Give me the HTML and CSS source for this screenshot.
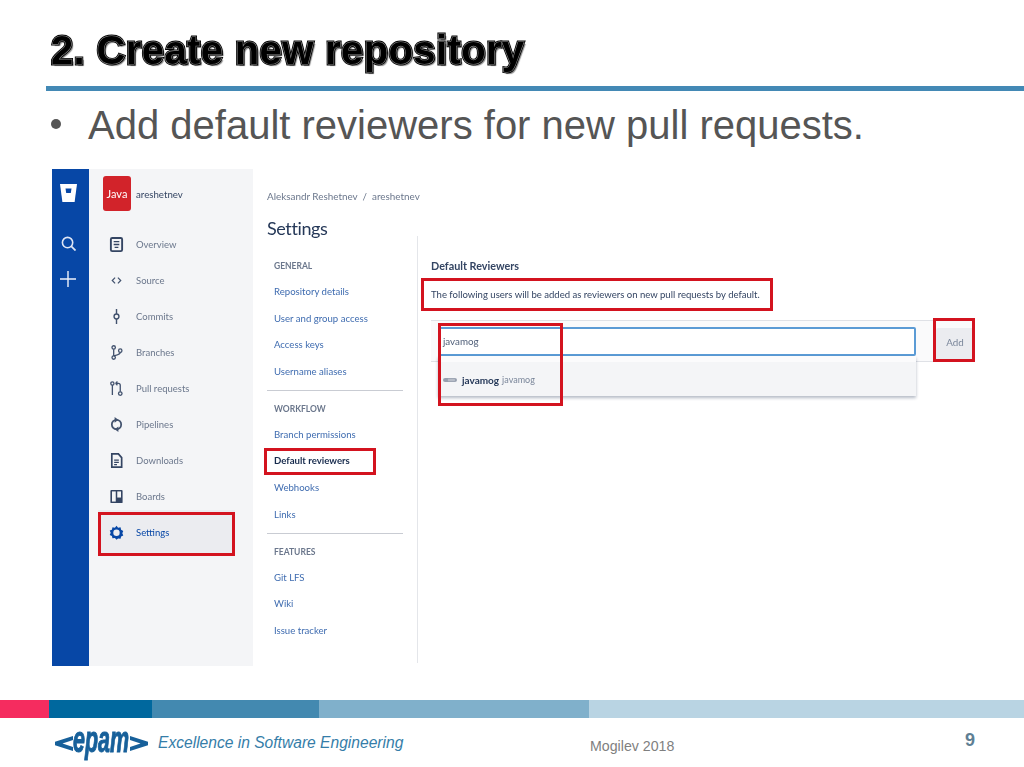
FILE: index.html
```html
<!DOCTYPE html>
<html lang="en">
<head>
  <meta charset="UTF-8" />
  <title>2. Create new repository</title>
  <link rel="stylesheet" href="styles.css">
</head>
<body>
  <main class="slide">
    <h1 class="slide-title" data-text="2. Create new repository">2. Create new repository</h1>
    <div class="title-rule"></div>
    <ul class="bullets">
      <li>Add default reviewers for new pull requests.</li>
    </ul>

    <!-- Bitbucket screenshot -->
    <section class="shot">
      <div class="rail">
        <svg class="rail-logo" viewBox="0 0 17 20"><path d="M0 1h17l-2.400 18H2.400z" fill="#fff"/><path d="M5.500 5.500h6l-.7 4.500H6.200z" fill="#0747a6"/></svg>
        <svg class="rail-icon" viewBox="0 0 16 16"><circle cx="7" cy="7" r="5.500" fill="none" stroke="#dfe6f5" stroke-width="1.700"/><path d="M10.800 10.800L15.500 15.500" stroke="#dfe6f5" stroke-width="1.900"/></svg>
        <svg class="rail-plus" viewBox="0 0 16 16"><path d="M8 0v16M0 8h16" stroke="#eef2fb" stroke-width="1.400"/></svg>
      </div>

      <nav class="side">
        <div class="repo">
          <span class="repo-badge">Java</span>
          <span class="repo-name">areshetnev</span>
        </div>
        <a class="side-item">
          <svg viewBox="0 0 16 16"><rect x="2" y="1" width="12" height="14" rx="1.500" fill="none" stroke="#344563" stroke-width="2"/><path d="M5 5h6M5 8h6M6 11h4" stroke="#344563" stroke-width="1.400"/></svg>
          Overview
        </a>
        <a class="side-item">
          <svg viewBox="0 0 16 16"><path d="M6.500 5L3.500 8l3 3M9.500 5l3 3-3 3" fill="none" stroke="#42526e" stroke-width="1.300"/></svg>
          Source
        </a>
        <a class="side-item">
          <svg viewBox="0 0 16 16"><circle cx="8" cy="8" r="2.600" fill="none" stroke="#42526e" stroke-width="1.500"/><path d="M8 0v5.400M8 10.600V16" stroke="#42526e" stroke-width="1.500"/></svg>
          Commits
        </a>
        <a class="side-item">
          <svg viewBox="0 0 16 16"><circle cx="5" cy="2.600" r="1.800" fill="none" stroke="#42526e" stroke-width="1.400"/><circle cx="5" cy="13.400" r="1.800" fill="none" stroke="#42526e" stroke-width="1.400"/><circle cx="12" cy="6" r="1.800" fill="none" stroke="#42526e" stroke-width="1.400"/><path d="M5 4.400v7.200M12 7.800c0 2.600-4 3-6.500 3.800" fill="none" stroke="#42526e" stroke-width="1.400"/></svg>
          Branches
        </a>
        <a class="side-item">
          <svg viewBox="0 0 16 16"><circle cx="3.600" cy="2.600" r="1.700" fill="none" stroke="#42526e" stroke-width="1.400"/><circle cx="12" cy="13.400" r="1.900" fill="none" stroke="#42526e" stroke-width="1.400"/><path d="M3.600 4.300V15M7 2.500h3c1.400 0 2 .8 2 2v7M7 2.500l2-2M7 2.500l2 2" fill="none" stroke="#42526e" stroke-width="1.400"/></svg>
          Pull requests
        </a>
        <a class="side-item">
          <svg viewBox="0 0 16 16"><circle cx="8" cy="8" r="5" fill="none" stroke="#42526e" stroke-width="1.900"/><path d="M6 0l4 3-4 3zM10 10l-4 3 4 3z" fill="#42526e"/></svg>
          Pipelines
        </a>
        <a class="side-item">
          <svg viewBox="0 0 16 16"><path d="M3 1h7l3.500 4v10H3z" fill="none" stroke="#344563" stroke-width="1.800"/><path d="M5.500 7.500h5M5.500 10h5M5.500 12.500h3" stroke="#344563" stroke-width="1.300"/></svg>
          Downloads
        </a>
        <a class="side-item">
          <svg viewBox="0 0 16 16"><rect x="1.500" y="1" width="13" height="14" rx="1" fill="#344563"/><rect x="3.200" y="2.600" width="4" height="10.800" fill="#f4f5f7"/><rect x="8.800" y="2.600" width="4" height="6.500" fill="#f4f5f7"/></svg>
          Boards
        </a>
        <a class="side-item is-active">
          <svg viewBox="0 0 16 16"><path d="M8 .8l1.700 2 2.600-.3.600 2.500 2.300 1.300-1 2.400 1 2.400-2.300 1.100-.6 2.500-2.600-.3L8 15.700l-1.700-1.800-2.600.3-.6-2.500-2.300-1.100 1-2.400-1-2.400L3.100 5l.6-2.500 2.600.3z" fill="#0747a6"/><circle cx="8" cy="8.200" r="3.400" fill="#ebecf0"/></svg>
          Settings
        </a>
      </nav>

      <div class="page">
        <div class="crumbs">Aleksandr Reshetnev &nbsp;/&nbsp; areshetnev</div>
        <h2 class="page-title">Settings</h2>
        <div class="page-cols">
          <div class="subnav">
            <h3>GENERAL</h3>
            <a>Repository details</a>
            <a>User and group access</a>
            <a>Access keys</a>
            <a>Username aliases</a>
            <hr>
            <h3>WORKFLOW</h3>
            <a>Branch permissions</a>
            <a class="is-current">Default reviewers</a>
            <a>Webhooks</a>
            <a>Links</a>
            <hr>
            <h3>FEATURES</h3>
            <a>Git LFS</a>
            <a>Wiki</a>
            <a>Issue tracker</a>
          </div>
          <div class="panel">
            <h4>Default Reviewers</h4>
            <p>The following users will be added as reviewers on new pull requests by default.</p>
            <div class="add-row">
              <div class="add-input">javamog</div>
              <div class="add-btn">Add</div>
            </div>
            <div class="suggest">
              <svg viewBox="0 0 20 8"><rect x="0" y="1" width="20" height="6" rx="3" fill="#97a0af"/><path d="M7 3h10M7 5h10" stroke="#dfe1e6" stroke-width=".8"/></svg>
              <b>javamog</b> <span>javamog</span>
            </div>
          </div>
        </div>
      </div>

      <!-- red callouts drawn over the screenshot -->
      <div class="mark mark-settings"></div>
      <div class="mark mark-reviewers"></div>
      <div class="mark mark-desc"></div>
      <div class="mark mark-user"></div>
      <div class="mark mark-add"></div>
    </section>

    <footer class="foot">
      <div class="stripe">
        <span class="s1"></span><span class="s2"></span><span class="s3"></span><span class="s4"></span><span class="s5"></span>
      </div>
      <div class="foot-row">
        <div class="epam">
          <svg viewBox="0 0 18 15"><path d="M18 0v4L7.500 7.500 18 11v4L0 9.200V5.800z" fill="#17609a"/></svg>
          <span>epam</span>
          <svg viewBox="0 0 18 15"><path d="M0 0v4l10.500 3.500L0 11v4l18-5.800V5.800z" fill="#17609a"/></svg>
        </div>
        <div class="tagline">Excellence in Software Engineering</div>
        <div class="foot-date">Mogilev 2018</div>
        <div class="foot-num">9</div>
      </div>
    </footer>
  </main>
</body>
</html>
```

FILE: styles.css
```css
/* ---------- base ---------- */
*,*::before,*::after{box-sizing:border-box;}
html,body{margin:0;height:100%;background:#fff;}
body{font-family:"Liberation Sans",Arial,sans-serif;overflow:hidden;}

.slide{
  width:1024px;
  height:767px;
  display:flex;
  flex-direction:column;
  overflow:hidden;
}

/* ---------- slide head ---------- */
/* outlined wordart title: black outer edge, light ring, black core */
.slide-title{
  position:relative;
  margin:28px 0 0 51px;
  height:50px;
  font-size:40px;
  line-height:44px;
  font-weight:700;
  letter-spacing:.37px;
  white-space:nowrap;
  color:#000;
  -webkit-text-stroke:2.800px #000;
  text-shadow:2px 2px 1px #888;
  filter:blur(.3px);
}
.slide-title::before,
.slide-title::after{
  content:attr(data-text);
  position:absolute;
  left:0;top:0;
  text-shadow:none;
}
.slide-title::before{-webkit-text-stroke:1.100px #8c8c8c;color:#8c8c8c;}
.slide-title::after{-webkit-text-stroke:0;color:#000;}

.title-rule{
  margin:8px 0 0 46px;
  height:5px;
  background:#4389b5;
}
.bullets{
  list-style:none;
  margin:9px 0 0;
  padding:0 0 0 51px;
  height:69px;
}
.bullets li{
  font-size:40px;
  line-height:50px;
  color:#555;
  padding-left:37px;
  position:relative;
}
.bullets li::before{
  content:'';
  position:absolute;
  left:0;top:19px;
  width:10px;height:10px;
  border-radius:50%;
  background:#555;
}

/* ---------- screenshot ---------- */
.shot{
  position:relative;
  margin-left:52px;
  width:933px;
  height:497px;
  display:flex;
  font-family:Lato,"Noto Sans",sans-serif;
  font-size:10px;
  color:#505f79;
  filter:blur(.45px);
}

.rail{
  width:37px;
  flex-shrink:0;
  background:#0747a6;
  display:flex;
  flex-direction:column;
  align-items:center;
  padding:14px 5px 0 0;
}
.rail-logo{width:17px;height:20px;flex-shrink:0;}
.rail-icon{width:15px;height:15px;margin-top:33px;}
.rail-plus{width:16px;height:16px;margin-top:20px;}

.side{
  width:164px;
  flex-shrink:0;
  background:#f4f5f7;
  padding:7px 0 0 0;
}
.repo{
  display:flex;
  align-items:center;
  gap:5px;
  height:35px;
  padding-left:14px;
  margin-bottom:16px;
}
.repo-badge{
  width:28px;height:35px;
  border-radius:3px;
  background:#d2232a;
  color:#fff;
  font-size:11px;
  display:flex;
  align-items:center;
  justify-content:center;
}
.repo-name{color:#344563;font-size:9.700px;}

.side-item{
  display:flex;
  align-items:center;
  height:35.900px;
  padding-left:20px;
  gap:12px;
  font-size:9.500px;
  color:#6b778c;
}
.side-item svg{width:15px;height:15px;flex-shrink:0;}
.side-item.is-active{
  color:#0747a6;
  background:#ebecf0;
  margin-left:9px;
  padding-left:11px;
  margin-right:18px;
  height:44px;
  margin-top:-4px;
}

.page{
  flex:1;
  padding:20px 0 0 14px;
  background:#fff;
}
.crumbs{font-size:9.900px;line-height:14px;color:#6b778c;}
.page-title{
  margin:12px 0 0;
  font-size:18px;
  line-height:26px;
  font-weight:400;
  letter-spacing:-.4px;
  color:#253858;
}
.page-cols{display:flex;height:427px;margin-top:-5px;}

.subnav{
  width:150px;
  flex-shrink:0;
  padding-top:23px;
}
.subnav h3{
  margin:0 0 0 7px;
  font-size:8.500px;
  line-height:14px;
  font-weight:700;
  color:#6b778c;
}
.subnav a{
  display:block;
  margin:0 0 0 7px;
  padding-top:12px;
  height:26.700px;
  line-height:14px;
  font-size:9.600px;
  color:#3f6cb0;
  white-space:nowrap;
}
.subnav a.is-current{color:#172b4d;font-weight:700;}
.subnav hr{
  width:136px;
  margin:10px 0 11px;
  border:0;
  height:1px;
  background:#c9ccd3;
}

.panel{
  flex:1;
  border-left:1px solid #e4e6ea;
  padding:23px 0 0 13px;
}
.panel h4{
  margin:0;
  font-size:10.800px;
  line-height:14px;
  font-weight:700;
  color:#344563;
}
.panel p{
  margin:15px 0 0;
  font-size:9.550px;
  line-height:14px;
  color:#344563;
  white-space:nowrap;
}
.add-row{
  margin-top:18px;
  height:42px;
  width:544px;
  border-top:1px solid #dfe1e6;
  border-bottom:1px solid #dfe1e6;
  background:#fafafb;
  display:flex;
  align-items:flex-start;
  padding:6px 0 0 7px;
  gap:20px;
}
.add-input{
  width:478px;
  height:29px;
  border:2px solid #5b9bd5;
  border-radius:2px;
  background:#fff;
  padding-left:3px;
  line-height:25px;
  font-size:9.800px;
  color:#505f79;
}
.add-btn{
  width:38px;
  height:33px;
  margin-top:1px;
  background:#ebecf0;
  border-radius:2px;
  text-align:center;
  line-height:28px;
  font-size:9.800px;
  color:#7a869a;
}
.suggest{
  position:relative;
  margin:-6px 0 0 7px;
  width:478px;
  height:40px;
  background:linear-gradient(#fbfbfc 0 6px,#f4f5f7 6px);
  box-shadow:0 2px 3px rgba(9,30,66,.3);
  display:flex;
  align-items:center;
  gap:3px;
  padding:7px 0 0 5px;
  font-size:9px;
  color:#7a869a;
}
.suggest svg{width:14px;height:6px;margin-right:2px;}
.suggest b{font-size:10px;color:#253858;}

/* red callouts */
.mark{
  position:absolute;
  border:3px solid #d3131f;
}
.mark-settings{left:46px;top:343px;width:137px;height:44px;}
.mark-reviewers{left:212px;top:279px;width:112px;height:27px;}
.mark-desc{left:369px;top:109px;width:352px;height:33px;}
.mark-user{left:386px;top:154px;width:125px;height:83px;}
.mark-add{left:881px;top:149px;width:42px;height:44px;}

/* ---------- footer ---------- */
.foot{margin-top:34px;}
.stripe{display:flex;height:18px;}
.stripe span{display:block;}
.s1{width:49px;background:#f52c5f;}
.s2{width:103px;background:#00689e;}
.s3{width:167px;background:#4389b0;}
.s4{width:270px;background:#80b0cb;}
.s5{flex:1;background:#b9d4e3;}

.foot-row{
  display:flex;
  align-items:flex-start;
  padding:12px 0 0 55px;
}
.epam{
  width:93px;
  height:26px;
  display:flex;
  align-items:center;
  color:#17609a;
}
.epam svg{width:18px;height:15px;flex-shrink:0;}
.epam span{
  width:57px;
  flex-shrink:0;
  font-size:37px;
  line-height:26px;
  font-weight:700;
  font-style:italic;
  -webkit-text-stroke:1px #17609a;
  transform:scaleX(.58);
  transform-origin:left center;
  margin-top:-7px;
}
.tagline{
  margin-left:10px;
  font-size:15.600px;
  line-height:26px;
  font-style:italic;
  color:#357da8;
  width:432px;
}
.foot-date{
  font-size:14.200px;
  line-height:20px;
  margin-top:6px;
  color:#7f7f7f;
  width:375px;
}
.foot-num{
  font-size:18px;
  line-height:20px;
  font-weight:700;
  color:#5f7f94;
}
```
